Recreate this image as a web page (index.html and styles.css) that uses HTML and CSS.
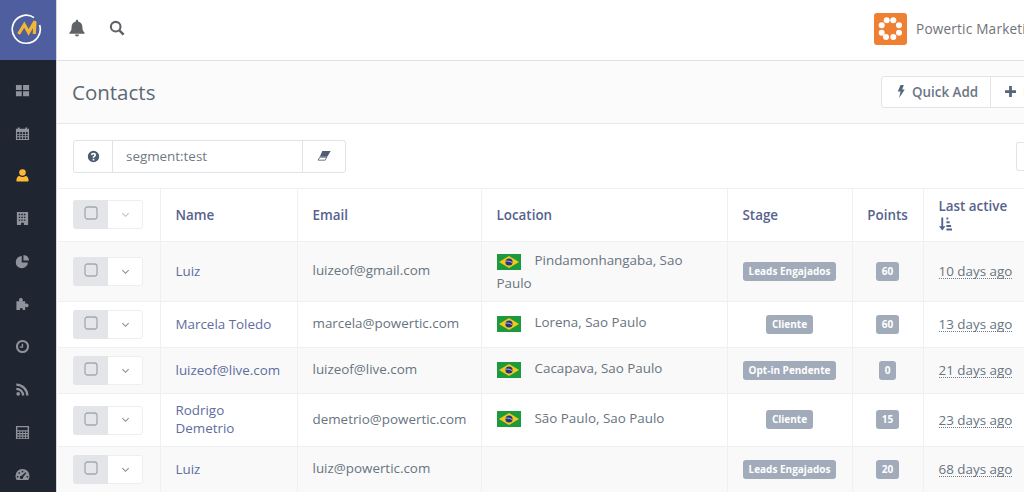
FILE: index.html
```html
<!DOCTYPE html>
<html lang="en">
<head>
<meta charset="utf-8">
<title>Contacts</title>
<link rel="stylesheet" href="styles.css">
</head>
<body>
<svg class="defs" width="0" height="0" aria-hidden="true">
  <defs>
    <symbol id="flag" viewBox="0 0 24 16">
      <rect width="24" height="16" fill="#1c9a3c"/>
      <path d="M12 2 22 8 12 14 2 8Z" fill="#f4c81c"/>
      <circle cx="12" cy="8" r="3.6" fill="#27357e"/>
      <path d="M8.6 7.2c2.4-.4 4.8.2 6.8 1.6" stroke="#e8e8e8" stroke-width=".7" fill="none"/>
    </symbol>
    <symbol id="chev" viewBox="0 0 10 6">
      <path d="M1.5 1 5 4.500 8.500 1" fill="none" stroke="currentColor" stroke-width="1.200"/>
    </symbol>
    <symbol id="box" viewBox="0 0 14 14">
      <rect x="1" y="1" width="12" height="12" rx="2.500" fill="#e4e6ea" stroke="#a4a8b0" stroke-width="1.300"/>
    </symbol>
  </defs>
</svg>
<div class="app">
  <aside class="sidebar">
    <div class="brand">
      <svg class="logo" viewBox="0 0 32 32" width="32" height="32">
        <path d="M24 4.600A14 14 0 1 0 29.600 12" fill="none" stroke="#fff" stroke-width="1.700"/>
        <path d="M8.600 21 14.300 11.700l4.300 7.700L25 8.400 24.300 21" fill="none" stroke="#f2b632" stroke-width="3.200"/>
      </svg>
    </div>
    <nav class="nav">
      <svg class="ico" viewBox="0 0 16 16"><path d="M1 2h6.200v5.400H1zM8.600 2H15v5.400H8.600zM1 8.800h6.200V14H1zM8.600 8.800H15V14H8.600z"/></svg>
      <svg class="ico" viewBox="0 0 16 16"><path fill-rule="evenodd" d="M1 3h2V1.500h2V3h6V1.500h2V3h2v12H1zM2.300 6.500v1.900h2.300V6.500zm3.300 0v1.900h2V6.500zm3 0v1.900h2V6.500zm3 0v1.900h1.900V6.500zM2.300 9.400v1.600h2.300V9.400zm3.300 0v1.600h2V9.400zm3 0v1.600h2V9.400zm3 0v1.600h1.900V9.400zM2.300 12v1.800h2.300V12zm3.300 0v1.800h2V12zm3 0v1.800h2V12zm3 0v1.800h1.900V12z"/></svg>
      <svg class="ico ico-on" viewBox="0 0 16 16"><circle cx="8" cy="4.800" r="3.500"/><path d="M2.500 14.500c-.8 0-1-.6-1-1.300 0-2.700 1.300-4.700 3.300-4.700 1 .8 2 1.200 3.200 1.200s2.200-.4 3.200-1.200c2 0 3.300 2 3.300 4.700 0 .7-.2 1.300-1 1.300z"/></svg>
      <svg class="ico" viewBox="0 0 16 16"><path fill-rule="evenodd" d="M2 1h12v14H9.500v-2.500h-3V15H2zM4 3v1.500h1.500V3zm2.700 0v1.500h1.600V3zm2.800 0v1.500H11V3zM4 6v1.500h1.500V6zm2.700 0v1.500h1.600V6zm2.800 0v1.500H11V6zM4 9v1.500h1.500V9zm2.700 0v1.500h1.600V9zm2.800 0v1.500H11V9z"/></svg>
      <svg class="ico" viewBox="0 0 16 16"><path d="M7.200 2.200A6.500 6.500 0 1 0 13.800 9H7.200z"/><path d="M9 1a6.500 6.500 0 0 1 6 6H9z"/></svg>
      <svg class="ico" viewBox="0 0 16 16"><path d="M1.500 5.500h3.200C4 4.800 4 2 6.300 2s2.300 2.800 1.600 3.500h3v3c.7-.7 3.600-.7 3.600 1.500s-2.900 2.200-3.600 1.500V15H8c.5-.8.500-2.200-1.200-2.200S5 14.200 5.500 15h-4z"/></svg>
      <svg class="ico" viewBox="0 0 16 16"><path fill-rule="evenodd" d="M8 1a7 7 0 1 1 0 14A7 7 0 0 1 8 1zm0 2.200a4.800 4.800 0 1 0 0 9.600 4.800 4.800 0 0 0 0-9.600zM7.200 5h1.500v4.300H5V8h2.200z"/></svg>
      <svg class="ico" viewBox="0 0 16 16"><circle cx="3.400" cy="12.600" r="2"/><path d="M1.400 6v2.500a6 6 0 0 1 6 6h2.500a8.500 8.500 0 0 0-8.500-8.500z"/><path d="M1.400 1.500V4a10.500 10.500 0 0 1 10.500 10.500h2.500a13 13 0 0 0-13-13z"/></svg>
      <svg class="ico" viewBox="0 0 16 16"><path fill-rule="evenodd" d="M1 1h14v14H1zm1.500 1.500v3h11v-3zm0 4.500v1.600h2.200V7zm3.200 0v1.600h2V7zm3 0v1.600h2V7zm3 0v1.600h1.800V7zm-9.200 2.800v1.500h2.200V9.800zm3.200 0v1.500h2V9.800zm3 0v1.500h2V9.800zm3 0v1.500h1.800V9.800zm-9.200 2.600V14h2.200v-1.600zm3.200 0V14h2v-1.600zm3 0V14h2v-1.600zm3 0V14h1.800v-1.600z"/></svg>
      <svg class="ico" viewBox="0 0 16 16"><path fill-rule="evenodd" d="M8 2a7.500 7.500 0 0 1 7.500 7.500c0 1.600-.5 3-1.300 4.300H1.800A7.500 7.500 0 0 1 .5 9.500 7.500 7.500 0 0 1 8 2zM7.200 4v1.600h1.600V4zM3.700 5.500v1.600h1.600V5.500zm7.400 0L7.300 9.300a1.800 1.800 0 1 0 1.400 1.400l3.400-4.300zM2 9.500v1.600h1.600V9.500zm10.400 0v1.600H14V9.500z"/></svg>
    </nav>
  </aside>

  <main class="content">
    <header class="topbar">
      <svg class="bar-ico" viewBox="0 0 16 16" width="18" height="18"><path d="M8 .6c.6 0 1 .4 1 1v.6c2.500.5 3.800 2.400 3.800 5 0 2.600.6 3.700 1.900 5.100.3.400.1.900-.5.900H1.800c-.6 0-.8-.5-.5-.9C2.600 10.900 3.200 9.800 3.200 7.200c0-2.600 1.300-4.500 3.800-5v-.6c0-.6.400-1 1-1zM6.200 13.800h3.600a1.800 1.800 0 0 1-3.600 0z"/></svg>
      <svg class="bar-ico search" viewBox="0 0 16 16" width="16" height="16"><circle cx="6.700" cy="6.700" r="4.800" fill="none" stroke="currentColor" stroke-width="2.100"/><path d="M10.300 10.300 14.600 14.600" stroke="currentColor" stroke-width="2.500" fill="none"/></svg>
      <div class="account">
        <span class="avatar">
          <svg viewBox="0 0 33 32" width="33" height="32"><rect width="33" height="32" rx="3" fill="#ef7f33"/><g fill="#fff"><circle cx="12.700" cy="7.300" r="3"/><circle cx="19.300" cy="7.300" r="3"/><circle cx="25" cy="12.300" r="3"/><circle cx="25" cy="19.700" r="3"/><circle cx="19.300" cy="24" r="3"/><circle cx="12" cy="24" r="3"/><circle cx="7.700" cy="19.700" r="3"/><circle cx="7.700" cy="12.300" r="3"/></g></svg>
        </span>
        <span class="account-name">Powertic Marketing</span>
      </div>
    </header>

    <section class="pagehead">
      <h1 class="title">Contacts</h1>
      <div class="actions">
        <button class="btn"><svg class="btn-ico" viewBox="0 0 8 14" width="8" height="13"><path d="M3.500 0H7L5.300 4.800H8L2 14l1.500-7H.5z"/></svg>Quick Add</button>
        <button class="btn"><svg class="btn-ico" viewBox="0 0 12 12" width="11" height="11"><path d="M4.500 0h3v4.500H12v3H7.500V12h-3V7.500H0v-3h4.500z"/></svg>New Contact</button>
      </div>
    </section>

    <section class="toolbar">
      <div class="search-group">
        <span class="sg-cell sg-help"><svg viewBox="0 0 16 16" width="13" height="13"><path fill="#4e5d72" fill-rule="evenodd" d="M8 1a7 7 0 1 1 0 14A7 7 0 0 1 8 1zM7 10.800v2h2v-2zM8 3.500c-1.800 0-3 1-3.100 2.600l1.900.3c.1-.8.500-1.200 1.200-1.200.6 0 1 .4 1 .9 0 .5-.3.800-.9 1.200-.9.600-1.100 1.100-1.100 2v.2h2c0-.6.200-.8.800-1.200.9-.6 1.300-1.300 1.300-2.200 0-1.600-1.300-2.600-3.100-2.600z"/></svg></span>
        <span class="sg-cell sg-input">segment:test</span>
        <span class="sg-cell sg-erase"><svg viewBox="0 0 16 12" width="14" height="10"><path fill="#4e5d72" d="M6 0h10l-4 7H3z"/><path fill="#fff" stroke="#4e5d72" d="M2.800 7.500h8.500L9.500 11H1z"/></svg></span>
      </div>
      <span class="stub"></span>
    </section>

    <table class="grid">
      <colgroup>
        <col class="c-check"><col class="c-name"><col class="c-email"><col class="c-loc"><col class="c-stage"><col class="c-points"><col class="c-last">
      </colgroup>
      <thead>
        <tr class="r-head">
          <th><span class="rowctl muted"><span class="rc-box"><svg width="14" height="14"><use href="#box"/></svg></span><span class="rc-chev"><svg width="9" height="6"><use href="#chev"/></svg></span></span></th>
          <th>Name</th>
          <th>Email</th>
          <th>Location</th>
          <th>Stage</th>
          <th class="center">Points</th>
          <th class="last">Last active<br><svg class="sort" viewBox="0 0 14 14" width="13" height="14"><path d="M2.500 0h2v9.500H7L3.500 14 0 9.500h2.500z"/><path d="M8 0h2v2.200H8zM8 4h3.500v2.200H8zM8 8h5v2.200H8zM8 11.800h6V14H8z"/></svg></th>
        </tr>
      </thead>
      <tbody>
        <tr class="r1 alt">
          <td><span class="rowctl"><span class="rc-box"><svg width="14" height="14"><use href="#box"/></svg></span><span class="rc-chev"><svg width="9" height="6"><use href="#chev"/></svg></span></span></td>
          <td class="link">Luiz</td>
          <td>luizeof@gmail.com</td>
          <td class="loc loc-wrap"><svg class="flag" width="24" height="16"><use href="#flag"/></svg>Pindamonhangaba, Sao Paulo</td>
          <td class="center"><span class="tag">Leads Engajados</span></td>
          <td class="center"><span class="tag">60</span></td>
          <td class="when"><span class="ago">10 days ago</span></td>
        </tr>
        <tr class="r2">
          <td><span class="rowctl"><span class="rc-box"><svg width="14" height="14"><use href="#box"/></svg></span><span class="rc-chev"><svg width="9" height="6"><use href="#chev"/></svg></span></span></td>
          <td class="link">Marcela Toledo</td>
          <td>marcela@powertic.com</td>
          <td class="loc"><svg class="flag" width="24" height="16"><use href="#flag"/></svg>Lorena, Sao Paulo</td>
          <td class="center"><span class="tag">Cliente</span></td>
          <td class="center"><span class="tag">60</span></td>
          <td class="when"><span class="ago">13 days ago</span></td>
        </tr>
        <tr class="r3 alt">
          <td><span class="rowctl"><span class="rc-box"><svg width="14" height="14"><use href="#box"/></svg></span><span class="rc-chev"><svg width="9" height="6"><use href="#chev"/></svg></span></span></td>
          <td class="link">luizeof@live.com</td>
          <td>luizeof@live.com</td>
          <td class="loc"><svg class="flag" width="24" height="16"><use href="#flag"/></svg>Cacapava, Sao Paulo</td>
          <td class="center"><span class="tag">Opt-in Pendente</span></td>
          <td class="center"><span class="tag">0</span></td>
          <td class="when"><span class="ago">21 days ago</span></td>
        </tr>
        <tr class="r4">
          <td><span class="rowctl"><span class="rc-box"><svg width="14" height="14"><use href="#box"/></svg></span><span class="rc-chev"><svg width="9" height="6"><use href="#chev"/></svg></span></span></td>
          <td class="link">Rodrigo Demetrio</td>
          <td>demetrio@powertic.com</td>
          <td class="loc"><svg class="flag" width="24" height="16"><use href="#flag"/></svg>São Paulo, Sao Paulo</td>
          <td class="center"><span class="tag">Cliente</span></td>
          <td class="center"><span class="tag">15</span></td>
          <td class="when"><span class="ago">23 days ago</span></td>
        </tr>
        <tr class="r5 alt">
          <td><span class="rowctl"><span class="rc-box"><svg width="14" height="14"><use href="#box"/></svg></span><span class="rc-chev"><svg width="9" height="6"><use href="#chev"/></svg></span></span></td>
          <td class="link">Luiz</td>
          <td>luiz@powertic.com</td>
          <td></td>
          <td class="center"><span class="tag">Leads Engajados</span></td>
          <td class="center"><span class="tag">20</span></td>
          <td class="when"><span class="ago">68 days ago</span></td>
        </tr>
      </tbody>
    </table>
  </main>
</div>
</body>
</html>
```

FILE: styles.css
```css
* { box-sizing: border-box; }
html, body { margin: 0; height: 100%; overflow: hidden; }
body { font-family: "Open Sans", "Liberation Sans", sans-serif; font-size: 13.4px; color: #5d6c7c; background: #fff; }
.defs { position: absolute; }
.app { display: flex; width: 1024px; height: 492px; overflow: hidden; }

.sidebar { flex: 0 0 57px; background: #1f2531; border-right: 1px solid #d5d6da; display: flex; flex-direction: column; }
.brand { height: 60px; flex: none; background: #4e5e9e; display: flex; align-items: center; justify-content: center; padding: 0 4px 3px 0; }
.nav { display: flex; flex-direction: column; align-items: center; padding-top: 23px; gap: 27.7px; padding-right: 12px; }
.ico { width: 15px; height: 15px; fill: #8f939b; flex: none; }
.ico-on { fill: #fdb933; }

.content { flex: 1; min-width: 0; display: flex; flex-direction: column; }
.topbar { height: 61px; flex: none; background: #fff; border-bottom: 1px solid #dfe0e2; display: flex; align-items: center; padding: 0 0 4px 11px; }
.bar-ico { fill: #5f6368; color: #5f6368; }
.search { margin-left: 23px; }
.account { display: flex; align-items: center; margin-left: auto; width: 150px; flex: none; white-space: nowrap; }
.avatar { display: block; height: 32px; width: 33px; flex: none; margin: 2px 9px 0 0; }
.account-name { font-size: 13.6px; color: #6f7378; letter-spacing: .2px; }

.pagehead { height: 63px; flex: none; background: #fbfbfb; border-bottom: 1px solid #e6e8ea; display: flex; align-items: center; padding-left: 15px; justify-content: space-between; }
.title { margin: 0; font-size: 20.5px; font-weight: 400; color: #5d6873; }
.actions { display: flex; width: 143px; flex: none; margin-top: -1px; }
.btn { flex: none; height: 32px; background: #fff; border: 1px solid #e2e4e7; border-radius: 3px 0 0 3px; padding: 0 12px 0 15px; font: 600 13.4px "Open Sans", sans-serif; color: #6a7785; display: flex; align-items: center; white-space: nowrap; }
.btn + .btn { border-left: 1px solid #e2e4e7; margin-left: -1px; border-radius: 0; padding-left: 14px; }
.btn-ico { fill: #55667a; margin-right: 7px; flex: none; }

.toolbar { height: 64px; flex: none; background: #fff; display: flex; align-items: center; justify-content: space-between; padding-left: 16px; }
.search-group { display: flex; height: 33px; border: 1px solid #e0e2e5; border-radius: 3px; width: 273px; }
.sg-cell { display: flex; align-items: center; }
.sg-help { width: 39px; justify-content: center; border-right: 1px solid #e0e2e5; }
.sg-input { width: 190px; padding-left: 13px; color: #6f7a85; border-right: 1px solid #e0e2e5; }
.sg-erase { flex: 1; justify-content: center; }
.stub { width: 8px; height: 29px; border: 1px solid #e2e4e7; border-right: 0; border-radius: 3px 0 0 3px; }

.grid { border-collapse: collapse; table-layout: fixed; width: 1020px; flex: none; margin-left: 1px; }
.c-check { width: 102px; }
.c-name { width: 137px; }
.c-email { width: 184px; }
.c-loc { width: 246px; }
.c-stage { width: 125px; }
.c-points { width: 71px; }
.c-last { width: 155px; }
.grid th, .grid td { border: 1px solid #eff0f2; border-left: 0; padding: 0 15px 2px; text-align: left; vertical-align: middle; font-size: 13.4px; line-height: 21px; }
.grid tr > :first-child { padding: 0; }
.grid th { font-weight: 600; color: #57628e; padding-bottom: 0; }
.grid .center { text-align: center; padding: 0 0 2px; }
.grid th.center { padding-bottom: 0; }
.grid .last { line-height: 18px; }
.r-head { height: 53px; }
.r1 { height: 60px; }
.r2, .r3 { height: 46px; }
.r4 { height: 53px; }
.r5 { height: 46px; }
.alt td { background: #f9f9f9; }
.grid td { color: #687480; }
.grid td.link { color: #5e6d9e; line-height: 18px; }
.grid td.loc { padding-bottom: 4px; }
.grid td.loc-wrap { padding: 1px 15px 0; line-height: 23px; }
.grid td.when { padding-bottom: 0; }

.rowctl { display: flex; width: 70px; height: 29px; margin-left: 15px; border: 1px solid #eceef0; border-radius: 3px; background: #fff; }
.r-head .rowctl { margin-top: -1px; }
.rc-box { width: 35px; background: #e3e5e9; display: flex; align-items: center; justify-content: center; padding-bottom: 3px; margin: -1px 0 -1px -1px; border-radius: 3px 0 0 3px; }
.rc-chev { flex: 1; display: flex; align-items: center; justify-content: center; color: #858d98; }
.muted .rc-chev { color: #bcc0c5; }
.rowctl svg { display: block; }

.flag { vertical-align: -4.5px; margin-right: 14px; }
.tag { display: inline-block; background: #a1abba; color: #fff; border-radius: 3px; font-size: 10px; font-weight: 700; line-height: 19px; padding: 0 6px; white-space: nowrap; vertical-align: middle; }
.ago { border-bottom: 1px dotted #6f7a85; white-space: nowrap; line-height: 14px; display: inline-block; }
.sort { fill: #57628e; display: inline-block; vertical-align: top; margin-top: 2px; }
```
